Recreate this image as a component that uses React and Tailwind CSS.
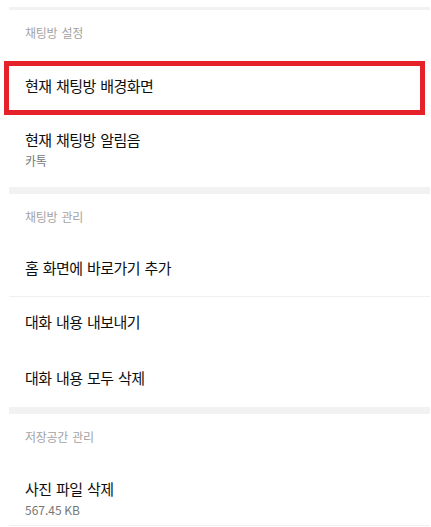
export default function App() {
  const font = { fontFamily: '"Noto Sans CJK KR", "Noto Sans", sans-serif' };
  const Header = ({ children, h, pt }) => (
    <div className={`${h} ${pt} px-4`}>
      <div className="text-[12px] leading-[18px] tracking-[-0.3px] [word-spacing:2px] text-[#a3a3a3]">{children}</div>
    </div>
  );
  const title = "text-[15px] leading-[20px] tracking-[-0.5px] [word-spacing:1.5px] font-normal text-[#0e0e0e]";
  return (
    <div className="w-[431px] h-[527px] overflow-hidden bg-white" style={font}>
      <div className="ml-[9px] mr-[1px]">
        <div className="h-[7px]" />
        <div className="h-[3px] bg-[#f2f2f2]" />
        <Header h="h-[51px]" pt="pt-[14px]">채팅방 설정</Header>
        <div className="relative h-[54px] px-4 pt-[15px]">
          <div className={title}>현재 채팅방 배경화면</div>
          <div className="absolute top-0 bottom-0 left-[-5px] right-[5px] border-[5px] border-[#e5222a]" />
        </div>
        <div className="h-[72px] px-4 pt-[15px]">
          <div className={title}>현재 채팅방 알림음</div>
          <div className="mt-[3px] text-[12px] leading-[16px] tracking-[-0.2px] text-[#777]">카톡</div>
        </div>
        <div className="h-[7px] bg-[#f2f2f2]" />
        <Header h="h-[47px]" pt="pt-[14px]">채팅방 관리</Header>
        <div className="h-[56px] px-4 pt-[17px] border-b border-[#f0f0f0]">
          <div className={title}>홈 화면에 바로가기 추가</div>
        </div>
        <div className="h-[53px] px-4 pt-[15px]">
          <div className={title}>대화 내용 내보내기</div>
        </div>
        <div className="h-[57px] px-4 pt-[18px]">
          <div className={title}>대화 내용 모두 삭제</div>
        </div>
        <div className="h-[7px] bg-[#f2f2f2]" />
        <Header h="h-[49px]" pt="pt-[14px]">저장공간 관리</Header>
        <div className="h-[63px] px-4 pt-[16px] border-b border-[#f0f0f0]">
          <div className={title}>사진 파일 삭제</div>
          <div className="mt-[3px] text-[12px] leading-[16px] text-[#777]">567.45 KB</div>
        </div>
      </div>
    </div>
  );
}
